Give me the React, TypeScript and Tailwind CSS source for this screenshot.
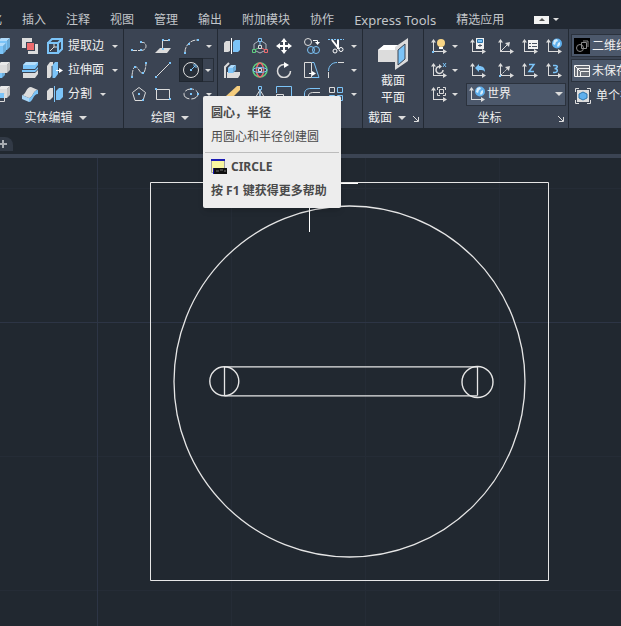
import React, { useState } from 'react';
import clsx from 'clsx';

const BLUE = '#7cc4f8';
const LIGHT = '#dcdcdc';

interface IconProps {
    children: React.ReactNode;
    size?: number;
}

const Icon = ({ children, size = 16 }: IconProps) => (
    <svg
        width={size}
        height={size}
        viewBox={`0 0 ${size} ${size}`}
        fill="none"
        stroke={LIGHT}
        className="block shrink-0"
        aria-hidden="true"
    >
        {children}
    </svg>
);

// Small square grip, given by its centre
const Grip = ({ x, y }: { x: number; y: number }) => (
    <rect x={x - 1} y={y - 1} width="2" height="2" fill={BLUE} stroke="none" />
);

const Axes = () => (
    <>
        <path d="M2.5 14V2M2 13.5h12" />
        <path d="M0 4.5 2.5 1 5 4.5zM12 11l4 2.5-4 2.5z" fill={LIGHT} stroke="none" />
    </>
);

const Globe = () => (
    <>
        <circle cx="11" cy="5.5" r="5" fill="#5fb0ee" stroke="none" />
        <path d="M8 2l3-1 1 2-2 1-1 3-2-1zM12 5l2-1v3l-2 2-1-1z" fill="#d6ecfb" stroke="none" />
    </>
);

const CubeFaces = ({ x = 0, y = 0, w = 9, h = 9, color = LIGHT }: { x?: number; y?: number; w?: number; h?: number; color?: string }) => (
    <g stroke="none">
        <path d={`M${x} ${y + 3}h${w}v${h}h${-w}z`} fill={color} />
        <path d={`M${x} ${y + 3}l3-3h${w}l-3 3z`} fill={color} />
        <path d={`M${x} ${y + 3}l3-3h${w}l-3 3z`} fill="#ffffff" fillOpacity="0.4" />
        <path d={`M${x + w} ${y + 3}l3-3v${h}l-3 3z`} fill={color} />
        <path d={`M${x + w} ${y + 3}l3-3v${h}l-3 3z`} fill="#000000" fillOpacity="0.12" />
    </g>
);

const icons: Record<string, React.ReactNode> = {
    union: (
        <>
            <CubeFaces x={4} y={0} w={9} h={9} color={BLUE} />
            <CubeFaces x={0} y={5} w={9} h={8} color={BLUE} />
        </>
    ),
    subtract: (
        <>
            <CubeFaces x={1} y={6} w={7} h={7} color={BLUE} />
            <CubeFaces x={4} y={0} w={9} h={8} />
        </>
    ),
    intersect: (
        <>
            <CubeFaces x={4} y={0} w={9} h={9} />
            <path d="M1.5 7.5h9v8h-9z" fill="#3b4453" />
            <path d="M5 7h5v5H5z" fill={BLUE} stroke="none" />
        </>
    ),
    interfere: (
        <g stroke="none">
            <path d="M0 0h10v10H0zM6 6h10v10H6z" fill={LIGHT} />
            <path d="M4 4h9v9H4z" fill="#3b4453" />
            <path d="M5 5h7v7H5z" fill="#ee6b6e" />
        </g>
    ),
    slice: (
        <g stroke="none">
            <path d="M1 3l3-3h12v3l-3 4H1z" fill={BLUE} />
            <path d="M1 3l3-3h12l-3 3z" fill="#b5defb" />
            <path d="M1 11h12v5H1zM13 11l3-3v4l-3 4z" fill={LIGHT} />
            <path d="M0 8h13l3-3v2l-3 3H0z" fill={BLUE} />
        </g>
    ),
    thicken: (
        <g stroke="none">
            <path d="M0 9c4 0 4-8 9-8l7 3c-5 0-5 8-9 8z" fill={LIGHT} />
            <path d="M0 9l7 3v4l-7-3z" fill="#a9d6f7" />
            <path d="M7 12c4 0 4-8 9-8v4c-5 0-5 8-9 8z" fill={BLUE} />
        </g>
    ),
    extractEdges: (
        <>
            <path d="M1 5h10v10H1zM1 5l4-4h10l-4 4M15 1v10l-4 4" stroke={BLUE} strokeWidth="2" />
            <path d="M3 13l4-4h3M7 9V6" />
        </>
    ),
    extrudeFaces: (
        <>
            <path d="M0 4l3-4h3v12l-3 4H0z" fill={LIGHT} stroke="none" />
            <path d="M5 4l3-4h3v12l-3 4H5z" fill={BLUE} stroke="none" />
            <path d="M5 4v12" stroke="#3b4453" />
            <path d="M9 8.500h4" stroke="#ffffff" />
            <path d="M12 6l4 2.500-4 2.500z" fill="#ffffff" stroke="none" />
        </>
    ),
    separate: (
        <>
            <path d="M0 5l3-3h3v9l-3 3H0z" fill={LIGHT} stroke="none" />
            <path d="M9 5l3-3h4v9l-3 3H9z" fill={BLUE} stroke="none" />
            <path d="M7.500 0v16" stroke={BLUE} />
        </>
    ),
    polyline: (
        <>
            <path d="M2 12.500h8M10 12.500c7 0 6-9 1-8" strokeDasharray="4 1" />
            <Grip x={1} y={12} />
            <Grip x={10} y={12} />
            <Grip x={10} y={4} />
        </>
    ),
    plane: (
        <>
            <path d="M0 15l5-5h11l-4 5z" fill={LIGHT} stroke="none" />
            <path d="M7.500 12V2.500H13" />
            <Grip x={8} y={2} />
            <Grip x={14} y={2} />
            <Grip x={8} y={11} />
        </>
    ),
    arc: (
        <>
            <path d="M2 14C2 8 7 2 14 2" strokeDasharray="5 1" />
            <Grip x={2} y={15} />
            <Grip x={6} y={6} />
            <Grip x={15} y={2} />
        </>
    ),
    spline: (
        <>
            <path d="M1 14C2 3 5 3 8 8s6 5 7-6" strokeDasharray="6 1" />
            <Grip x={1} y={15} />
            <Grip x={4} y={5} />
            <Grip x={12} y={11} />
            <Grip x={15} y={1} />
        </>
    ),
    line: (
        <>
            <path d="M1 15L15 1" />
            <Grip x={1} y={15} />
            <Grip x={15} y={1} />
        </>
    ),
    circle: (
        <>
            <circle cx="8" cy="8" r="7.500" />
            <path d="M9 7l3-3M10 3h3v3" stroke={BLUE} />
            <Grip x={8} y={8} />
        </>
    ),
    polygon: (
        <>
            <path d="M8 1.500l6.500 5-2.500 8H4l-2.500-8z" />
            <Grip x={8} y={8} />
            <Grip x={12} y={14} />
        </>
    ),
    rectangle: (
        <>
            <path d="M1.500 3.500h13v10h-13z" />
            <Grip x={1} y={3} />
            <Grip x={15} y={13} />
        </>
    ),
    ellipse: (
        <>
            <ellipse cx="8" cy="8" rx="7" ry="5" strokeDasharray="9 2" />
            <Grip x={8} y={8} />
            <Grip x={8} y={3} />
            <Grip x={15} y={8} />
        </>
    ),
    mirror3d: (
        <>
            <path d="M0 5l2-2h4v10l-2 1H0z" fill={LIGHT} stroke="none" />
            <path d="M9 4l2-2h5v10l-2 2H9z" fill={BLUE} stroke="none" />
            <path d="M7.500 0v16" stroke="#ffffff" />
        </>
    ),
    move3d: (
        <>
            <path d="M8 2l6 4v6l-6 3-6-3V6z" stroke="#aeb4bd" />
            <path d="M8 9V1" stroke={BLUE} />
            <path d="M8 9l-7 4" stroke="#5fd080" />
            <path d="M8 9l7 4" stroke="#ee6b6e" />
            <path d="M6.500.5h3v3h-3z" stroke={BLUE} fill="#3b4453" />
            <path d="M.5 11.500h3v3h-3z" stroke="#5fd080" fill="#3b4453" />
            <path d="M12.500 11.500h3v3h-3z" stroke="#ee6b6e" fill="#3b4453" />
            <path d="M6.500 7.500h3v3h-3z" fill="#3b4453" />
        </>
    ),
    move: (
        <>
            <path d="M8 2v12M2 8h12" stroke="#ffffff" strokeWidth="2" />
            <path d="M8 0l3 4H5zM8 16l3-4H5zM0 8l4-3v6zM16 8l-4-3v6z" fill="#ffffff" stroke="none" />
        </>
    ),
    copy: (
        <>
            <circle cx="4" cy="4" r="3.500" />
            <circle cx="7" cy="12" r="3.500" stroke={BLUE} />
            <circle cx="12" cy="12" r="3.500" stroke={BLUE} />
            <path d="M9 2.500h4.500V5" stroke="#ffffff" />
            <path d="M11 4h5l-2.500 3z" fill="#ffffff" stroke="none" />
        </>
    ),
    trim: (
        <>
            <path d="M0 1.500h16" stroke={BLUE} strokeDasharray="2 1" />
            <path d="M4 2l7 9M10 2v9" stroke="#ffffff" strokeWidth="2" />
            <circle cx="7" cy="13" r="2" stroke="#ffffff" />
            <circle cx="13" cy="11.500" r="2" stroke="#ffffff" />
        </>
    ),
    align3d: (
        <>
            <path d="M1 16V5l4-4" strokeWidth="2" />
            <path d="M3 10h13v3l-2 3H3z" fill={LIGHT} stroke="none" />
            <CubeFaces x={4} y={3} w={5} h={5} color={BLUE} />
        </>
    ),
    rotate3d: (
        <>
            <circle cx="8" cy="8" r="7" stroke="#5fd080" strokeWidth="1.500" />
            <ellipse cx="8" cy="8" rx="3.500" ry="7" stroke="#ee6b6e" strokeWidth="1.500" />
            <ellipse cx="8" cy="8" rx="7" ry="2.500" stroke={BLUE} />
            <path d="M6.500 6.500h3v3h-3z" fill="#3b4453" />
        </>
    ),
    rotate: (
        <>
            <path d="M9 2.500H8A6.500 6.500 0 1 0 14.500 9" strokeWidth="1.500" />
            <path d="M8 0l5 3-5 3z" fill="#ffffff" stroke="none" />
        </>
    ),
    stretch: (
        <>
            <path d="M.5.5h7v15h-7z" />
            <path d="M8 .5h2l5 15H8" stroke={BLUE} />
            <path d="M5 11.500h5" stroke="#ffffff" />
            <path d="M8 9l4 2.500L8 14z" fill="#ffffff" stroke="none" />
        </>
    ),
    fillet: (
        <>
            <path d="M.5 16v-6M10 .5h6" />
            <path d="M.5 9C.5 4 4 .5 9 .5" stroke={BLUE} />
        </>
    ),
    erase: (
        <g stroke="none">
            <path d="M13 0h3v4L6 14l-4-4z" fill="#f5cd7e" />
            <path d="M2 10l4 4-5 2z" fill={LIGHT} />
        </g>
    ),
    scale3d: (
        <>
            <path d="M8 4L2 14h12zM8 4v12" />
            <path d="M6.500.5h3v3h-3z" stroke={BLUE} fill="#3b4453" />
            <path d="M8 4v6" stroke={BLUE} />
        </>
    ),
    scale: (
        <>
            <path d="M.5 7V.5h15v15H9" stroke={BLUE} />
            <path d="M.5 8.500h7v7h-7z" />
        </>
    ),
    offset: (
        <>
            <path d="M.5 16V8C.5 4 3 2.500 7 2.500h9" stroke={BLUE} />
            <path d="M4.500 16v-6c0-2 1-3 4-3.500H16" />
        </>
    ),
    array: (
        <>
            <path d="M1.500 1.500h5v5h-5z" />
            <path d="M9.500 1.500h5v5h-5zM1.500 9.500h5v5h-5zM9.500 9.500h5v5h-5z" stroke={BLUE} />
        </>
    ),
    ucsIcon: (
        <>
            <Axes />
            <circle cx="10" cy="5" r="4" fill="#f8d585" stroke="none" />
            <path d="M8 9h4v2H8z" fill="#ffffff" stroke="none" />
            <Grip x={2} y={14} />
        </>
    ),
    ucsNamed: (
        <>
            <Axes />
            <path d="M6 0h8v11H6z" fill="#f2f2f2" stroke="none" />
            <path d="M7.500 1.500h5v3h-5z" stroke="#2d76ad" fill={BLUE} />
            <path d="M8 7.500h4M10 6v3" stroke="#4a5361" />
        </>
    ),
    ucsView: (
        <>
            <Axes />
            <path d="M3 13l7-7" />
            <path d="M12 4l-5 1 4 4z" fill={LIGHT} stroke="none" />
        </>
    ),
    ucsDialog: (
        <>
            <Axes />
            <path d="M6 2h10v9H6z" fill="#f2f2f2" stroke="none" />
            <path d="M7 5.500h2M10 5.500h5M7 8.500h2M10 8.500h5" stroke="#4a5361" />
        </>
    ),
    ucsWorld: (
        <>
            <Axes />
            <Globe />
        </>
    ),
    ucsX: (
        <>
            <Axes />
            <path d="M9 4.500A3.500 3.500 0 1 0 12 8" strokeWidth="1.500" />
            <path d="M8 2l3 2.500L8 7z" fill={LIGHT} stroke="none" />
            <path d="M12 1l3 4M15 1l-3 4" stroke={BLUE} />
        </>
    ),
    ucsPrevious: (
        <>
            <Axes />
            <path d="M5 6l4-4v2c4 0 6 2 6 6-1-2-3-2-6-2v2z" fill={BLUE} stroke="none" />
        </>
    ),
    ucsOrigin: (
        <>
            <Axes />
            <path d="M3 13l7-7" strokeDasharray="2 1" />
            <path d="M12 4l-5 1 4 4z" fill={LIGHT} stroke="none" />
            <Grip x={2} y={14} />
        </>
    ),
    ucsZ: (
        <>
            <Axes />
            <path d="M7 2.500h5L7 9.500h5" stroke={BLUE} strokeWidth="1.500" />
        </>
    ),
    ucs3Point: (
        <>
            <Axes />
            <path d="M7 3.500h2.500c3 0 2 3-1 3 4 0 3.500 4 0 4H7" stroke={BLUE} strokeWidth="1.500" />
        </>
    ),
    ucsObject: (
        <>
            <Axes />
            <path d="M6.500 4V1.500H9M12 1.500h2.500V4M14.500 7v2.500H12M9 9.500H6.500V7" />
            <path d="M8.500 3.500h4v4h-4z" />
        </>
    ),
    visualStyle: (
        <>
            <path d="M0 0h16v16H0z" fill="#000000" stroke="none" />
            <circle cx="6" cy="10" r="3.500" stroke="#8a8a8a" />
            <path d="M7.500 4.500h5v6h-5zM9 3h5v6" stroke="#8a8a8a" />
        </>
    ),
    savedView: (
        <>
            <path d="M.5 2.500h15v11H.5z" fill="#6a6f78" stroke="#f2f2f2" />
            <path d="M3.500 13V5.500H15M6.500 13V8.500H15M1 3l5 5" stroke="#f2f2f2" />
        </>
    ),
    viewport: (
        <>
            <path d="M.5 4V.5H4M12 .5h3.500V4M15.500 12v3.500H12M4 15.500H.5V12" />
            <path d="M2 2h12v12H2z" fill={LIGHT} stroke="none" />
            <path d="M8 4l4 2v4l-4 2-4-2V6z" fill="#5fb0ee" stroke="#2d76ad" />
        </>
    ),
};

const Arrow = () => <span className="block h-0 w-0 border-x-3 border-t-3 border-x-transparent border-t-[#dcdcdc]" />;

const ToolButton = ({ icon, label, className }: { icon: string; label: string; className?: string }) => (
    <button type="button" aria-label={label} className={clsx('flex h-6 w-6 shrink-0 items-center justify-center', className)}>
        <Icon>{icons[icon]}</Icon>
    </button>
);

const ArrowButton = ({ label, narrow, className }: { label: string; narrow?: boolean; className?: string }) => (
    <button
        type="button"
        aria-label={label}
        className={clsx('flex h-6 shrink-0 items-center justify-center', narrow ? 'w-2' : 'w-[11px]', className)}
    >
        <Arrow />
    </button>
);

interface PanelProps {
    title: string;
    flyout?: boolean;
    launcher?: boolean;
    className?: string;
    titleClassName?: string;
    children: React.ReactNode;
}

const Panel = ({ title, flyout = true, launcher, className, titleClassName, children }: PanelProps) => (
    <section className={clsx('flex shrink-0 flex-col border-r border-[#232a34] pt-[5px]', className)}>
        <div className="h-18">{children}</div>
        <div className={clsx('relative flex h-6 items-center justify-center', titleClassName)}>
            <button type="button" className="flex items-center gap-1.5">
                {title}
                {flyout && <span className="block h-0 w-0 border-x-4 border-t-4 border-x-transparent border-t-[#dcdcdc]" />}
            </button>
            {launcher && (
                <button type="button" aria-label={`${title}设置`} className="absolute right-1 top-2.5">
                    <svg width="6" height="6" viewBox="0 0 6 6" fill="none" stroke={LIGHT} className="block">
                        <path d="M0 0l5 5M5.500 1v4.500H1" />
                    </svg>
                </button>
            )}
        </div>
    </section>
);

const tabs = ['参数化', '插入', '注释', '视图', '管理', '输出', '附加模块', '协作', 'Express Tools', '精选应用'];

const solidRows = [
    { left: 'union', leftLabel: '并集', mid: 'interfere', midLabel: '干涉', icon: 'extractEdges', text: '提取边' },
    { left: 'subtract', leftLabel: '差集', mid: 'slice', midLabel: '剖切', icon: 'extrudeFaces', text: '拉伸面' },
    { left: 'intersect', leftLabel: '交集', mid: 'thicken', midLabel: '加厚', icon: 'separate', text: '分割' },
];

const modifyRows = [
    [['mirror3d', '三维镜像'], ['move3d', '三维移动'], ['move', '移动'], ['copy', '复制'], ['trim', '修剪']],
    [['align3d', '三维对齐'], ['rotate3d', '三维旋转'], ['rotate', '旋转'], ['stretch', '拉伸'], ['fillet', '圆角']],
    [['erase', '删除'], ['scale3d', '三维缩放'], ['scale', '缩放'], ['offset', '偏移'], ['array', '阵列']],
];

const ucsRows = [
    [['ucsIcon', '显示 UCS'], ['ucsNamed', 'UCS'], ['ucsView', '视图'], ['ucsDialog', '命名 UCS'], ['ucsWorld', '世界']],
    [['ucsX', 'X'], ['ucsPrevious', '上一个'], ['ucsOrigin', '原点'], ['ucsZ', 'Z 轴'], ['ucs3Point', '三点']],
];

const CircleTooltip = () => (
    <div
        role="tooltip"
        className="absolute left-6 top-[38px] z-10 h-28 w-[138px] rounded-xs bg-[#ededed] px-2 text-[#4a4a4a] shadow-md"
    >
        <p className="pt-[9px] leading-4 font-bold whitespace-nowrap">圆心，半径</p>
        <p className="pt-2 leading-4 whitespace-nowrap">用圆心和半径创建圆</p>
        <hr className="-mx-1.5 mt-[7px] border-[#bcbcbc]" />
        <p className="flex items-center gap-1 pt-1.5 leading-4 font-bold">
            <Icon>
                <path d="M.5 1.500h13v12H.5z" fill="#f8f6a0" stroke="#a0a0a0" />
                <path d="M0 1h14" stroke="#1a1ab4" strokeWidth="2" />
                <path d="M2 9h14v6H2z" fill="#101010" stroke="none" />
                <path d="M2.500 9v6" stroke="#1a1ab4" />
                <path d="M5 12h3M9 11h3M13 12h2" stroke="#777777" />
            </Icon>
            CIRCLE
        </p>
        <p className="pt-2 leading-4 font-bold whitespace-nowrap">按 F1 键获得更多帮助</p>
    </div>
);

const SelectBox = ({ icon, label, options, className }: { icon: string; label: string; options: string[]; className?: string }) => {
    const [value, setValue] = useState(options[0]);

    return (
        <div className={clsx('relative flex items-center border border-[#2b323d] bg-[#4c586b]', className)}>
            <span className="pointer-events-none absolute left-0.5">
                <Icon>{icons[icon]}</Icon>
            </span>
            <select
                aria-label={label}
                value={value}
                onChange={(e) => setValue(e.target.value)}
                className="h-full w-full appearance-none bg-transparent pl-5 outline-none"
            >
                {options.map((option) => (
                    <option key={option}>{option}</option>
                ))}
            </select>
            <span className="pointer-events-none absolute right-0.5 block h-0 w-0 border-x-4 border-t-4 border-x-transparent border-t-[#dcdcdc]" />
        </div>
    );
};

const Ribbon = () => (
    <div className="flex h-[99px] shrink-0 bg-[#3b4453]">
        <Panel title="实体编辑" className="w-[124px]" titleClassName="pt-0.5 pr-3">
            {solidRows.map((row) => (
                <div key={row.icon} className="flex h-6 items-center">
                    <ToolButton icon={row.left} label={row.leftLabel} className="-ml-2.5" />
                    <ToolButton icon={row.mid} label={row.midLabel} className="ml-1" />
                    <button type="button" className="ml-[5px] flex items-center gap-[5px]">
                        <Icon>{icons[row.icon]}</Icon>
                        {row.text}
                    </button>
                    <ArrowButton label={`${row.text}选项`} className="ml-[5px]" />
                </div>
            ))}
        </Panel>

        <Panel title="绘图" className="w-[94px] pl-[3px]" titleClassName="pt-0.5 pr-1">
            <div className="flex h-6">
                <ToolButton icon="polyline" label="多段线" />
                <ToolButton icon="plane" label="平面" />
                <ToolButton icon="arc" label="圆弧" className="ml-1" />
                <ArrowButton label="圆弧选项" />
            </div>
            <div className="flex h-6">
                <ToolButton icon="spline" label="样条曲线" />
                <ToolButton icon="line" label="直线" />
                <div className="relative ml-1 flex">
                    <ToolButton icon="circle" label="圆" className="border border-[#1f262f] bg-[#272e38]" />
                    <ArrowButton label="圆选项" className="border border-l-0 border-[#272e38]" />
                    <CircleTooltip />
                </div>
            </div>
            <div className="flex h-6">
                <ToolButton icon="polygon" label="多边形" />
                <ToolButton icon="rectangle" label="矩形" />
                <ToolButton icon="ellipse" label="椭圆" className="ml-1" />
                <ArrowButton label="椭圆选项" />
            </div>
        </Panel>

        <Panel title="修改" className="w-[145px] pl-0.5" titleClassName="pt-0.5 pr-3">
            {modifyRows.map((row) => (
                <div key={row[0][0]} className="flex h-6">
                    {row.map(([icon, label], index) => (
                        <ToolButton key={icon} icon={icon} label={label} className={clsx((index === 1 || index === 3) && 'ml-1')} />
                    ))}
                    <ArrowButton label={`${row[4][1]}选项`} />
                </div>
            ))}
        </Panel>

        <Panel title="截面" launcher className="w-[61px]" titleClassName="pt-0.5 pr-3">
            <button type="button" className="flex w-full flex-col items-center pt-1 leading-[17px]">
                <Icon size={32}>
                    <path d="M1 12l6-5h14v17H1z" fill={LIGHT} stroke="none" />
                    <path d="M1 12l6-5h14l-3 5z" fill="#ffffff" stroke="none" />
                    <path d="M18 9L31 0v23l-13 9z" fill={LIGHT} stroke="none" />
                    <path d="M21 12l7-6v15l-7 6z" fill={BLUE} stroke="#3b4453" />
                </Icon>
                <span className="pt-0.5">截面</span>
                <span>平面</span>
            </button>
        </Panel>

        <Panel title="坐标" flyout={false} launcher className="w-[145px] pl-[3px]" titleClassName="pt-0.5 pr-4">
            {ucsRows.map((row) => (
                <div key={row[0][0]} className="flex h-6">
                    {row.map(([icon, label], index) => (
                        <React.Fragment key={icon}>
                            <ToolButton
                                icon={icon}
                                label={label}
                                className={clsx(index === 1 && 'ml-[7px]', index === 2 && 'ml-1')}
                            />
                            {index === 0 && <ArrowButton narrow label={`${label}选项`} />}
                        </React.Fragment>
                    ))}
                </div>
            ))}
            <div className="flex h-6 items-center">
                <ToolButton icon="ucsObject" label="对象" />
                <ArrowButton narrow label="对象选项" />
                <SelectBox icon="ucsWorld" label="坐标系" options={['世界', '上一个']} className="mr-0.5 ml-[7px] h-[23px] flex-1" />
            </div>
        </Panel>

        <div className="flex min-w-0 flex-1 flex-col gap-0.5 overflow-hidden pt-[5px] pl-0.5">
            <SelectBox icon="visualStyle" label="视觉样式" options={['二维线框', '概念', '真实']} className="h-[23px] w-[120px]" />
            <SelectBox icon="savedView" label="视图" options={['未保存的视图', '俯视', '前视']} className="h-[23px] w-[120px]" />
            <button type="button" className="flex h-6 shrink-0 items-center gap-[5px] pl-1 whitespace-nowrap">
                <Icon>{icons.viewport}</Icon>
                单个视口
            </button>
        </div>
    </div>
);

const Drawing = () => (
    <svg viewBox="0 0 621 468" preserveAspectRatio="xMidYMid slice" fill="none" className="block h-full w-full">
        {/* Grid */}
        <path d="M231.500 0v468M365.500 0v468M499.500 0v468M0 30.500h621M0 298.500h621M0 432.500h621" stroke="#252c36" />
        <path d="M97.500 0v468M0 164.500h621" stroke="#2d3545" />

        <g stroke="#e6e6e6">
            <path d="M150.500 24.500h398v398h-398z" />
            <circle cx="349.500" cy="223.500" r="175.500" strokeWidth="1.300" />
            <path d="M224.500 208.800h253M224.500 237.800h253" strokeWidth="1.300" />
            <path d="M224.500 208.500v29M477.500 208.500v29" strokeWidth="1.300" />
            <circle cx="224.300" cy="223.300" r="14.500" strokeWidth="1.400" />
            <circle cx="477.500" cy="224" r="15.500" strokeWidth="1.400" />
        </g>

        {/* Crosshair cursor */}
        <path d="M309.500 30v44M260 25.500h98" stroke="#ffffff" />
    </svg>
);

const App = () => {
    const [activeTab, setActiveTab] = useState('');

    return (
        <div className="flex h-screen flex-col overflow-hidden bg-[#212830] font-['Noto_Sans','Noto_Sans_CJK_SC',sans-serif] text-xs text-[#f0f0f0]">
            <nav className="flex h-[29px] shrink-0 items-center gap-5 bg-[#222933] pt-2.5 whitespace-nowrap text-[#c3c6ca]">
                {tabs.map((tab) => (
                    <button
                        key={tab}
                        type="button"
                        onClick={() => setActiveTab(tab)}
                        className={clsx(
                            'shrink-0 first:-ml-[34px]',
                            tab === 'Express Tools' && 'text-[13px] leading-4',
                            activeTab === tab && 'text-white'
                        )}
                    >
                        {tab}
                    </button>
                ))}
                <button type="button" aria-label="最小化功能区" className="ml-2.5 flex items-center gap-1">
                    <span className="flex h-2 w-[15px] items-center justify-center bg-[#f2f2f2]">
                        <span className="block h-0 w-0 border-x-3 border-b-3 border-x-transparent border-b-[#555555]" />
                    </span>
                    <Arrow />
                </button>
            </nav>

            <Ribbon />

            <div className="flex h-[30px] shrink-0 items-center border-b-4 border-[#3b4453] pt-1.5">
                <button
                    type="button"
                    aria-label="新图形"
                    className="flex h-3.5 w-[13px] items-center rounded-tr-lg bg-[#323a46]"
                >
                    <svg width="7" height="8" viewBox="0 0 7 8" stroke="#a9adb2" strokeWidth="2" className="block">
                        <path d="M0 4h7M3 0v8" />
                    </svg>
                </button>
            </div>

            <main className="min-h-0 flex-1">
                <Drawing />
            </main>
        </div>
    );
};

export default App;
